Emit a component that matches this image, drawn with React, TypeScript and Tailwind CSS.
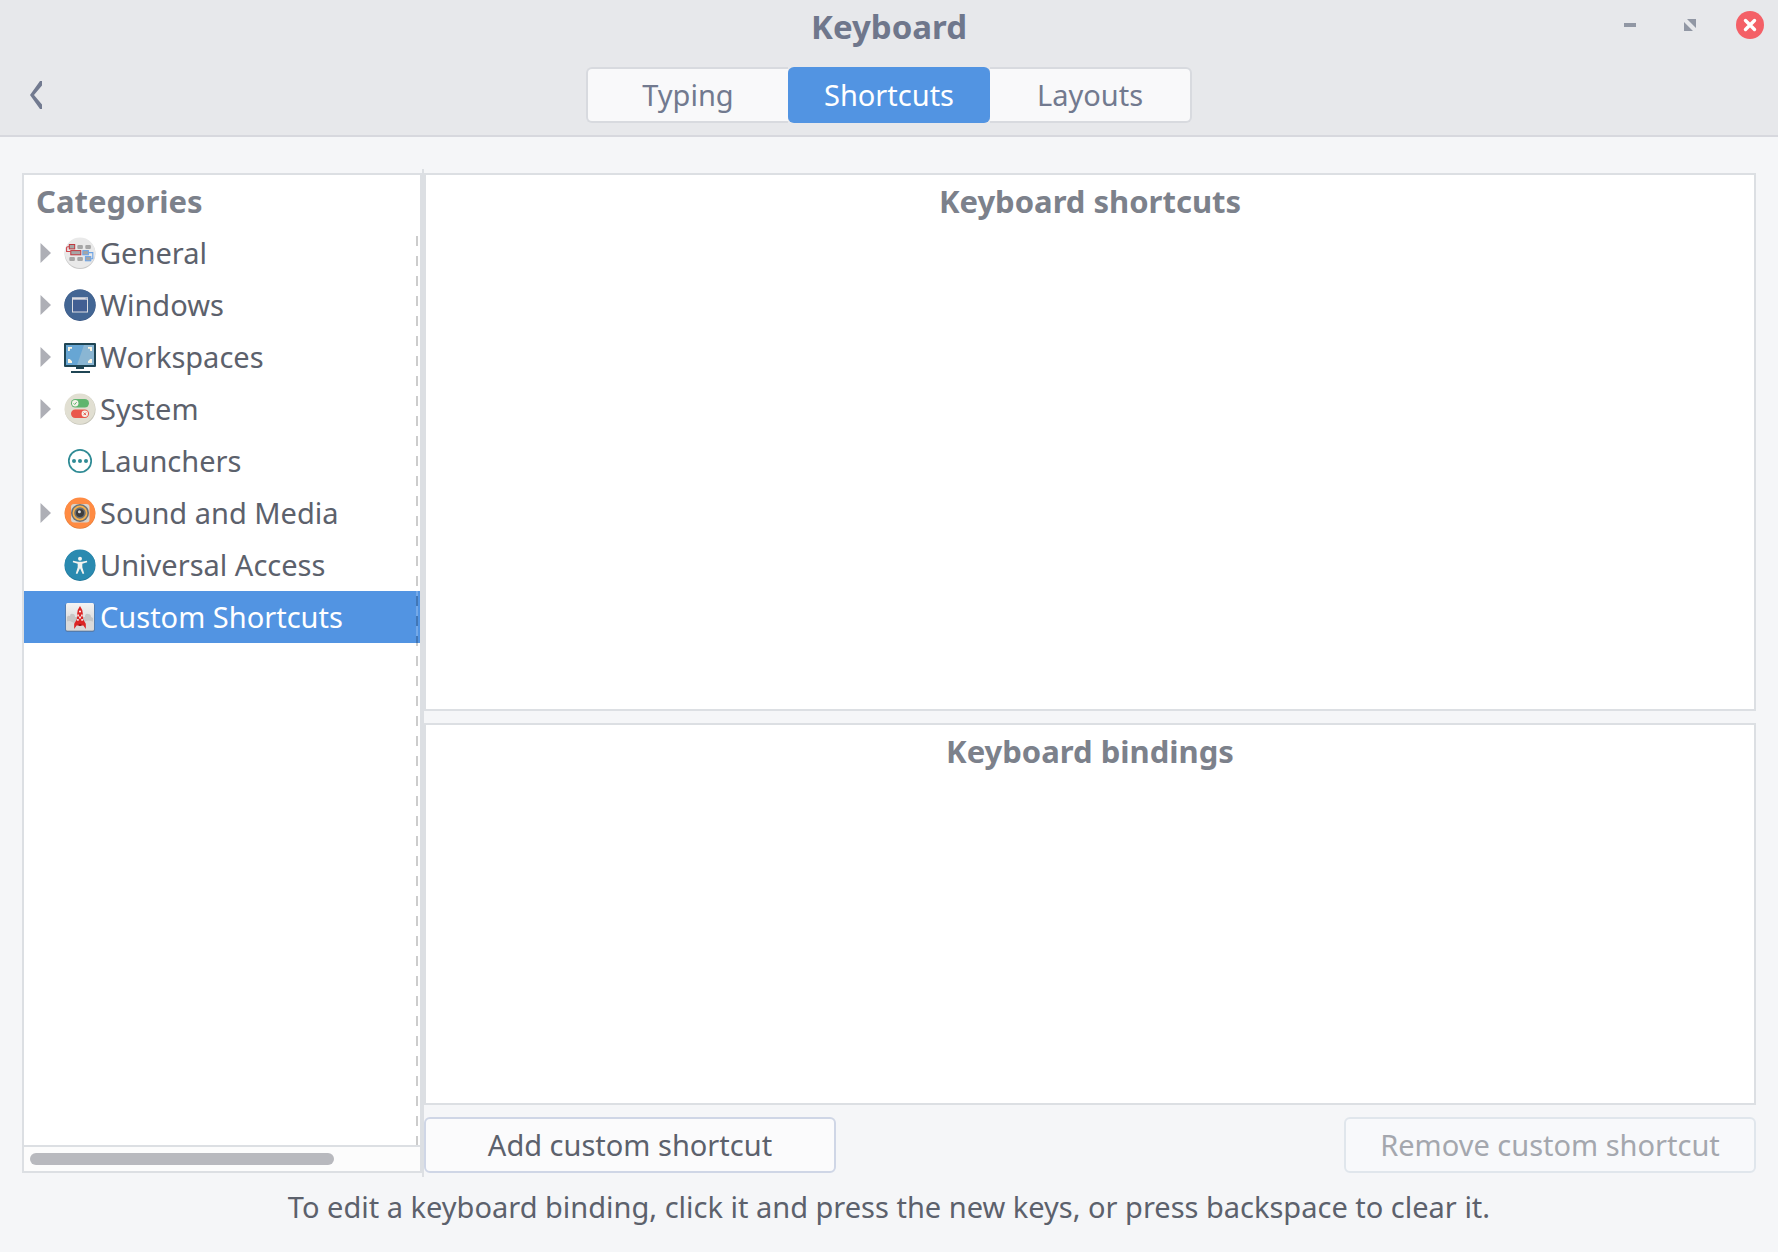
import React, { useState } from "react";

const iconClass = "size-8 shrink-0";

function GeneralIcon() {
  return (
    <svg viewBox="0 0 32 32" className={iconClass} aria-hidden="true">
      <circle cx="16" cy="16.6" r="15.4" fill="#c9c9c9" />
      <circle cx="16" cy="15.8" r="15.2" fill="#e9e9e9" />
      <g fill="#a6a6a6">
        <rect x="13.3" y="8" width="5.6" height="4" rx="1" />
        <rect x="21.3" y="8" width="5.6" height="4" rx="1" />
        <rect x="5.3" y="20" width="5.6" height="4" rx="1" />
        <rect x="13.3" y="20" width="5.6" height="4" rx="1" />
      </g>
      <path d="M5.5 9.7H3.8Q2.6 9.7 2.6 11v3.5h4" fill="none" stroke="#d0454c" strokeWidth="1.1" />
      <path d="M25 15.6h3.8v6.2H27" fill="none" stroke="#6ba3e6" strokeWidth="1.1" />
      <g fill="#a6a6a6" strokeWidth="1">
        <rect x="5.3" y="7.5" width="5.4" height="4.4" stroke="#c0373e" />
        <rect x="6.8" y="13.6" width="10" height="4.2" stroke="#c0373e" />
        <rect x="18.8" y="13.6" width="5.6" height="4.2" stroke="#6ba3e6" />
        <rect x="21.4" y="19.6" width="5.4" height="4.2" stroke="#6ba3e6" />
      </g>
    </svg>
  );
}

function WindowsIcon() {
  return (
    <svg viewBox="0 0 32 32" className={iconClass} aria-hidden="true">
      <circle cx="16" cy="16.2" r="15.7" fill="#365380" />
      <circle cx="16" cy="15.8" r="15.4" fill="#436694" />
      <rect x="8.5" y="9" width="15" height="14" fill="#425f93" stroke="#dcdde2" />
      <path d="M8 8.5h16v2.2H8z" fill="#dcdde2" />
      <path d="M21.5 8.8h2v1.2h-2z" fill="#a9b4ca" />
    </svg>
  );
}

function WorkspacesIcon() {
  return (
    <svg viewBox="0 0 32 32" className={iconClass} aria-hidden="true">
      <rect x="0" y="2" width="32" height="24" rx="1" fill="#1f4554" />
      <rect x="2" y="4" width="28" height="20" fill="#67a6d4" />
      <path d="M20 4h10v20H13z" fill="#8ab6d3" />
      <path d="M4 10V6h4v1.8H6L5.8 10zM28 10V6h-4v1.8h2l.2 2.2zM4 18v4h4v-1.8L5.8 18zM28 18v4h-4v-1.8l2.2-2.2z" fill="#fdf6e3" />
      <path d="M12 26h8v2h-8zM7 30h19v2H7z" fill="#1f4554" />
    </svg>
  );
}

function SystemIcon() {
  return (
    <svg viewBox="0 0 32 32" className={iconClass} aria-hidden="true">
      <circle cx="16.2" cy="16.4" r="15.4" fill="#c5c4b8" />
      <circle cx="15.8" cy="15.8" r="15.2" fill="#e1dfd2" />
      <rect x="7" y="6" width="18" height="8.4" rx="4.2" fill="#5fb56f" />
      <rect x="7" y="16.6" width="18" height="8.4" rx="4.2" fill="#e9574b" />
      <circle cx="11.2" cy="10.2" r="3.2" fill="#f5f3ea" />
      <circle cx="20.8" cy="20.8" r="3.2" fill="#f5f3ea" />
      <path d="m9.6 10.3 1.1 1.2 2-2.4" fill="none" stroke="#5fb56f" />
      <path d="m19.5 19.5 2.6 2.6m0-2.6-2.6 2.6" stroke="#e9574b" />
    </svg>
  );
}

function LaunchersIcon() {
  return (
    <svg viewBox="0 0 32 32" className={iconClass} aria-hidden="true">
      <circle cx="16" cy="16" r="11.2" fill="none" stroke="#2f8b95" strokeWidth="1.7" />
      <g fill="#2f8b95">
        <circle cx="10" cy="16" r="2" />
        <circle cx="16" cy="16" r="2" />
        <circle cx="22" cy="16" r="2" />
      </g>
    </svg>
  );
}

function SoundIcon() {
  return (
    <svg viewBox="0 0 32 32" className={iconClass} aria-hidden="true">
      <circle cx="16" cy="16.4" r="15.4" fill="#e27b35" />
      <circle cx="16" cy="15.8" r="15.2" fill="#ff8b43" />
      <rect x="7" y="7" width="18.5" height="18.5" rx="3" fill="#d9d3cb" />
      <circle cx="16" cy="16" r="9" fill="#6d7175" />
      <circle cx="16" cy="16" r="6.6" fill="none" stroke="#f5b04c" strokeWidth="1.7" />
      <circle cx="16" cy="16" r="4" fill="#3d3d3d" />
      <circle cx="15.4" cy="14.8" r="1.5" fill="#d8d8d8" />
    </svg>
  );
}

function AccessIcon() {
  return (
    <svg viewBox="0 0 32 32" className={iconClass} aria-hidden="true">
      <circle cx="16" cy="16.4" r="15.5" fill="#1f7699" />
      <circle cx="16" cy="15.8" r="15.2" fill="#2a8ab0" />
      <g fill="#f4f4f0">
        <circle cx="16" cy="9.8" r="2" />
        <path d="M9 11.8l5 1h4l5-1 .2 1.4-4.9 1.6v3.4l1.9 6.2-1.5.5L16 19.3l-2.7 5.6-1.5-.5 1.9-6.2v-3.4l-4.9-1.6z" />
      </g>
    </svg>
  );
}

function CustomIcon() {
  return (
    <svg viewBox="0 0 32 32" className={iconClass} aria-hidden="true">
      <defs>
        <linearGradient id="tile" x1="0" y1="0" x2="0" y2="1">
          <stop offset="0" stopColor="#f3f3f3" />
          <stop offset="1" stopColor="#cfcfcf" />
        </linearGradient>
      </defs>
      <rect x="1.3" y="2.4" width="29.4" height="28.4" rx="2" fill="#54749d" />
      <rect x="2" y="2" width="28" height="27.8" rx="1.5" fill="url(#tile)" />
      <path d="M3 16q1-2 3-1 0-3 3-2 2 0 2 3h10q0-4 3-3 3 0 3 3l2 1v6H3z" fill="#c6c6c6" />
      <path d="M2 21q3-2 6 0t6 0h6q4-3 10 0v6q0 2-2 2H4q-2 0-2-2z" fill="#dadada" />
      <path d="M16 5q-2.7 3.6-2.8 7.4l-.4 6-2.6 4.3V28l2.4-3.4h6.8l2.4 3.4v-5.3l-2.6-4.3-.4-6Q18.700 8.600 16 5z" fill="#dc2424" />
      <circle cx="16" cy="10.600" r="1" fill="#fff" />
      <path d="M13.200 13.500H15v2h-1.800zM17 13.500h1.800v2H17zM15 15.500h2v2h-2zM13 18h1.800v1.800H13zM17.200 18H19v1.800h-1.800z" fill="#f6d9d9" />
      <path d="M14.600 23.300h2.800v1.600h-2.800z" fill="#8d1717" />
    </svg>
  );
}

const categories = [
  { name: "General", Icon: GeneralIcon, expandable: true },
  { name: "Windows", Icon: WindowsIcon, expandable: true },
  { name: "Workspaces", Icon: WorkspacesIcon, expandable: true },
  { name: "System", Icon: SystemIcon, expandable: true },
  { name: "Launchers", Icon: LaunchersIcon, expandable: false },
  { name: "Sound and Media", Icon: SoundIcon, expandable: true },
  { name: "Universal Access", Icon: AccessIcon, expandable: false },
  { name: "Custom Shortcuts", Icon: CustomIcon, expandable: false },
];

const tabs = ["Typing", "Shortcuts", "Layouts"];

function Header({ tab, onTab }: { tab: string; onTab: (t: string) => void }) {
  return (
    <header className="border-b-2 border-[#d7d8de] bg-[#e7e8eb]">
      <div className="grid h-[54px] grid-cols-[1fr_auto_1fr] items-center">
        <h1 className="col-start-2 text-[33px] leading-[54px] font-bold text-[#6f778c]">Keyboard</h1>
        <div className="flex items-center justify-end gap-8 self-start pt-[11px] pr-[14px]">
          <button aria-label="Minimize" className="flex size-7 items-center justify-center">
            <svg viewBox="0 0 28 28" className="size-7"><path d="M8 12h12v4H8z" fill="#9197a4" /></svg>
          </button>
          <button aria-label="Maximize" className="flex size-7 items-center justify-center">
            <svg viewBox="0 0 28 28" className="size-7"><path d="M11 8h9v9zM8 11v9h9z" fill="#9197a4" /></svg>
          </button>
          <button aria-label="Close" className="flex size-7 items-center justify-center">
            <svg viewBox="0 0 28 28" className="size-7">
              <circle cx="14" cy="14" r="14" fill="#f46067" />
              <path d="m9.500 9.500 9 9m0-9-9 9" stroke="#fff" strokeWidth="3.4" strokeLinecap="round" />
            </svg>
          </button>
        </div>
      </div>
      <div className="grid h-[81px] grid-cols-[1fr_auto_1fr] items-start pt-[13px]">
        <button aria-label="Back" className="flex h-14 w-[72px] items-center justify-center">
          <svg viewBox="0 0 32 32" className="size-8">
            <path d="M22 2h-2L10 16l10 14h2v-4.500L14 16l8-9.500z" fill="#727a90" />
          </svg>
        </button>
        <nav className="flex h-14" role="tablist">
          {tabs.map((t, i) => (
            <button
              key={t}
              role="tab"
              aria-selected={t === tab}
              onClick={() => onTab(t)}
              className={
                "w-[202px] border-y-2 text-center " +
                (t === tab
                  ? "rounded-md border-[#5294e2] bg-[#5294e2] text-white"
                  : "border-[#d8dadf] bg-[#f9f9fa] text-[#727a8f] " +
                    (i === 0 ? "rounded-l-md border-l-2" : i === 2 ? "rounded-r-md border-r-2" : ""))
              }
            >
              {t}
            </button>
          ))}
        </nav>
      </div>
    </header>
  );
}

export default function App() {
  const [tab, setTab] = useState("Shortcuts");
  const [selected, setSelected] = useState("Custom Shortcuts");
  return (
    <div className="flex min-h-screen flex-col bg-[#f5f6f8] font-['Noto_Sans',sans-serif] text-[29px] leading-[52px] text-[#5c616c]">
      <Header tab={tab} onTab={setTab} />
      <main className="flex grow flex-col px-[22px] pt-8">
        <div className="flex grow">
          <aside className="my-1 flex w-[400px] shrink-0 flex-col border-2 border-[#dcdfe3] bg-white">
            <h2 className="pl-3 text-[31px] font-bold text-[#7c818b]">Categories</h2>
            <div className="relative grow">
              <ul>
                {categories.map(({ name, Icon, expandable }) => (
                  <li key={name}>
                    <button
                      onClick={() => setSelected(name)}
                      className={
                        "flex h-[52px] w-full items-center pl-4 text-left " +
                        (selected === name ? "bg-[#5294e2] text-white" : "")
                      }
                    >
                      <span className="flex w-6 shrink-0">
                        {expandable && (
                          <svg viewBox="0 0 12 20" className="h-5 w-3"><path d="M.5 0v20L11 10z" fill="#aeafb6" /></svg>
                        )}
                      </span>
                      <Icon />
                      <span className="pl-1 whitespace-nowrap">{name}</span>
                    </button>
                  </li>
                ))}
              </ul>
              <div className="pointer-events-none absolute top-[9px] right-[2px] bottom-0 w-[2px] bg-[repeating-linear-gradient(to_bottom,rgba(0,0,0,0.2)_0px,rgba(0,0,0,0.2)_10px,rgba(255,255,255,0.2)_10px,rgba(255,255,255,0.2)_20px)]" />
            </div>
            <div className="h-[26px] border-t-2 border-[#dcdfe3] bg-[#fcfcfc] px-[6px] pt-[6px]">
              <div className="h-3 w-[304px] rounded-full bg-[#b8b9be]" />
            </div>
          </aside>
          <div className="w-[2px] shrink-0 bg-[#dcdfe3]" />
          <div className="my-1 flex grow flex-col gap-3">
            <section className="grow-[534] basis-0 border-2 border-[#dcdfe3] bg-white">
              <h2 className="text-center text-[31px] font-bold text-[#7c818b]">Keyboard shortcuts</h2>
            </section>
            <section className="grow-[378] basis-0 border-2 border-[#dcdfe3] bg-white">
              <h2 className="text-center text-[31px] font-bold text-[#7c818b]">Keyboard bindings</h2>
            </section>
            <div className="flex justify-between">
              <button className="h-14 w-[412px] rounded-md border-2 border-[#cfd6e6] bg-[#fbfbfc]">Add custom shortcut</button>
              <button disabled className="h-14 w-[412px] rounded-md border-2 border-[#e0e6ec] bg-[#f8f9fb] text-[#a4a7ae]">
                Remove custom shortcut
              </button>
            </div>
          </div>
        </div>
        <p className="pt-1 pb-[19px] text-center">
          To edit a keyboard binding, click it and press the new keys, or press backspace to clear it.
        </p>
      </main>
    </div>
  );
}
